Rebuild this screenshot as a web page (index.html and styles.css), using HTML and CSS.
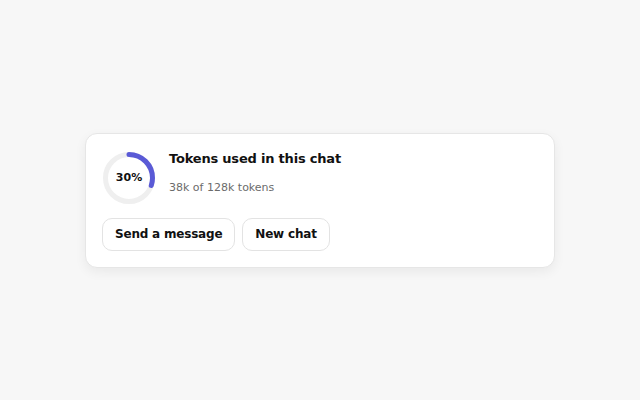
FILE: index.html
```html
<!DOCTYPE html>
<html>
<head>
<meta charset="utf-8">
<link rel="stylesheet" href="styles.css">
</head>
<body>
<div class="page">
  <div class="card">
    <div class="top">
      <div class="ring">
        <svg width="52" height="52" viewBox="0 0 52 52">
          <circle cx="26" cy="26" r="23.5" fill="none" stroke="#efefef" stroke-width="5"/>
          <circle cx="26" cy="26" r="23.5" fill="none" stroke="#5a5ad6" stroke-width="5" stroke-linecap="round" stroke-dasharray="44.3 200" transform="rotate(-90 26 26)"/>
        </svg>
        <span class="pct">30%</span>
      </div>
      <div class="info">
        <div class="title">Tokens used in this chat</div>
        <div class="sub">38k of 128k tokens</div>
      </div>
    </div>
    <div class="actions">
      <button class="btn">Send a message</button>
      <button class="btn">New chat</button>
    </div>
  </div>
</div>
</body>
</html>
```
FILE: styles.css
```css
html, body {
  margin: 0;
  padding: 0;
  background: #f7f7f7;
  font-family: "DejaVu Sans", sans-serif;
}
.page {
  width: 640px;
  height: 400px;
  display: flex;
  align-items: center;
  justify-content: center;
}
.card {
  width: 470px;
  box-sizing: border-box;
  background: #fff;
  border: 1px solid #e6e6e6;
  border-radius: 12px;
  padding: 18px 16px 16px;
  box-shadow: 0 4px 12px rgba(0,0,0,0.06);
}
.top {
  display: flex;
  align-items: flex-start;
  gap: 14px;
}
.ring {
  position: relative;
  width: 52px;
  height: 52px;
  margin-left: 1px;
}
.ring svg { display: block; }
.pct {
  position: absolute;
  inset: 0;
  display: flex;
  align-items: center;
  justify-content: center;
  font-size: 11px;
  font-weight: bold;
  color: #111;
}
.title {
  font-size: 13px;
  font-weight: bold;
  letter-spacing: -0.2px;
  color: #111;
  line-height: 14px;
}
.sub {
  margin-top: 15px;
  font-size: 11px;
  color: #6b6b6b;
  line-height: 14px;
}
.actions {
  display: flex;
  gap: 7px;
  margin-top: 14px;
}
.btn {
  font-family: "DejaVu Sans", sans-serif;
  font-size: 12px;
  font-weight: bold;
  letter-spacing: -0.2px;
  color: #111;
  background: #fff;
  border: 1px solid #e3e3e3;
  border-radius: 10px;
  height: 33px;
  padding: 0 12px;
}
```
